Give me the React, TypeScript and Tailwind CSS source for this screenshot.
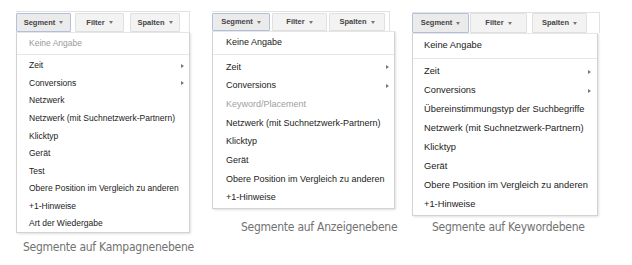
import React from "react";

type Item = { label: string; disabled?: boolean; sub?: boolean };

type Cfg = {
  wrap: string;
  bar: string;
  btnH: string;
  buttons: { label: string; cls: string; active?: boolean }[];
  menu: string;
  head: string;
  headMuted: boolean;
  list: string;
  row: string;
  items: Item[];
  caption: string;
  captionText: string;
};

const panels: Cfg[] = [
  {
    wrap: "ml-[16px] mt-[11px] w-[174px]",
    bar: "w-[174px] h-[21px] pt-[1px]",
    btnH: "h-[19px]",
    buttons: [
      { label: "Segment", cls: "w-[55px]", active: true },
      { label: "Filter", cls: "ml-[4px] w-[49px]" },
      { label: "Spalten", cls: "ml-[6px] w-[50px]" },
    ],
    menu: "w-[174px] text-[8.5px]",
    head: "h-[21px] pl-[12px]",
    headMuted: true,
    list: "pt-[2px]",
    row: "h-[17.56px] pl-[12px] pr-[5px]",
    items: [
      { label: "Zeit", sub: true },
      { label: "Conversions", sub: true },
      { label: "Netzwerk" },
      { label: "Netzwerk (mit Suchnetzwerk-Partnern)" },
      { label: "Klicktyp" },
      { label: "Gerät" },
      { label: "Test" },
      { label: "Obere Position im Vergleich zu anderen" },
      { label: "+1-Hinweise" },
      { label: "Art der Wiedergabe" },
    ],
    caption: "mt-[6.5px] ml-[7px]",
    captionText: "Segmente auf Kampagnenebene",
  },
  {
    wrap: "ml-[22px] mt-[11px] w-[183px]",
    bar: "w-[178px] h-[20px] pt-[1px]",
    btnH: "h-[18px]",
    buttons: [
      { label: "Segment", cls: "w-[58px]", active: true },
      { label: "Filter", cls: "ml-[2px] w-[55px]" },
      { label: "Spalten", cls: "ml-[2px] w-[56px]" },
    ],
    menu: "w-[183px] text-[9px]",
    head: "h-[22px] pl-[13px]",
    headMuted: false,
    list: "pt-[3px]",
    row: "h-[18.7px] pl-[13px] pr-[5px]",
    items: [
      { label: "Zeit", sub: true },
      { label: "Conversions", sub: true },
      { label: "Keyword/Placement", disabled: true },
      { label: "Netzwerk (mit Suchnetzwerk-Partnern)" },
      { label: "Klicktyp" },
      { label: "Gerät" },
      { label: "Obere Position im Vergleich zu anderen" },
      { label: "+1-Hinweise" },
    ],
    caption: "mt-[11.5px] ml-[29px]",
    captionText: "Segmente auf Anzeigenebene",
  },
  {
    wrap: "ml-[17px] mt-[12px] w-[188px]",
    bar: "w-[188px] h-[21px] pt-0",
    btnH: "h-[20px]",
    buttons: [
      { label: "Segment", cls: "w-[57px]", active: true },
      { label: "Filter", cls: "ml-[1px] w-[57px]" },
      { label: "Spalten", cls: "ml-[5px] w-[55px]" },
    ],
    menu: "w-[186px] text-[9.3px]",
    head: "h-[24px] pl-[11px]",
    headMuted: false,
    list: "pt-[3px]",
    row: "h-[19.14px] pl-[11px] pr-[6px]",
    items: [
      { label: "Zeit", sub: true },
      { label: "Conversions", sub: true },
      { label: "Übereinstimmungstyp der Suchbegriffe" },
      { label: "Netzwerk (mit Suchnetzwerk-Partnern)" },
      { label: "Klicktyp" },
      { label: "Gerät" },
      { label: "Obere Position im Vergleich zu anderen" },
      { label: "+1-Hinweise" },
    ],
    caption: "mt-[3.5px] ml-[20px]",
    captionText: "Segmente auf Keywordebene",
  },
];

function Panel({ cfg }: { cfg: Cfg }) {
  return (
    <div className={"flex flex-col shrink-0 " + cfg.wrap}>
      <div className={"flex items-start border-t border-r border-[#e2e2e2] " + cfg.bar}>
        {cfg.buttons.map((b) => (
          <div
            key={b.label}
            className={
              "flex items-center justify-center border rounded-[1px] font-bold text-[7.5px] text-[#444] " +
              cfg.btnH +
              " " +
              b.cls +
              (b.active
                ? " bg-[#ebebeb] border-[#b3c1dc]"
                : " bg-[#f3f3f3] border-[#e0e0e0]")
            }
          >
            <span>{b.label}</span>
            <span className="ml-[4px] w-0 h-0 border-x-[2.5px] border-x-transparent border-t-[3px] border-t-[#777]" />
          </div>
        ))}
      </div>
      <div
        className={
          "bg-white border border-[#d2d2d2] border-t-[#e6e6e6] shadow-[1px_1px_2px_rgba(0,0,0,0.12)] text-[#222] " +
          cfg.menu
        }
      >
        <div
          className={
            "flex items-center " +
            cfg.head +
            (cfg.headMuted ? " text-[#9a9a9a]" : "")
          }
        >
          Keine Angabe
        </div>
        <div className="h-px bg-[#e6e6e6]" />
        <div className={cfg.list}>
          {cfg.items.map((it) => (
            <div
              key={it.label}
              className={
                "flex items-center justify-between whitespace-nowrap " +
                cfg.row +
                (it.disabled ? " text-[#a0a0a0]" : "")
              }
            >
              <span>{it.label}</span>
              {it.sub && (
                <span className="w-0 h-0 border-y-[2.5px] border-y-transparent border-l-[3px] border-l-[#777]" />
              )}
            </div>
          ))}
        </div>
      </div>
      <div
        className={
          "whitespace-nowrap text-[12px] leading-[14px] tracking-[-0.25px] text-[#727272] font-['DejaVu_Sans_Condensed','DejaVu_Sans',sans-serif] " +
          cfg.caption
        }
      >
        {cfg.captionText}
      </div>
    </div>
  );
}

export default function App() {
  return (
    <div className="w-[632px] h-[265px] bg-white flex items-start overflow-hidden font-['Liberation_Sans',Arial,sans-serif]">
      {panels.map((p) => (
        <Panel key={p.captionText} cfg={p} />
      ))}
    </div>
  );
}
